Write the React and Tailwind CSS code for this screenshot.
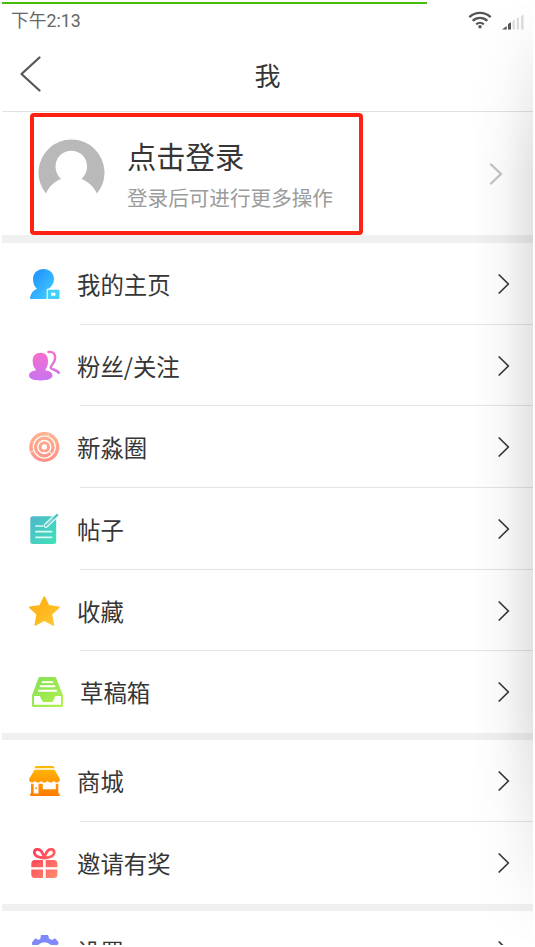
import React from 'react';

const HomeIcon = () => (
  <svg className="w-8 h-8" viewBox="0 0 32 32">
    <defs>
      <linearGradient id="home" x1="0" y1="0" x2="1" y2="1">
        <stop offset="0.1" stopColor="#1f8fff" />
        <stop offset="1" stopColor="#45d3ff" />
      </linearGradient>
    </defs>
    <path fill="url(#home)" d="M15.500 1C21.500 1 26 5.200 26 11c0 4.200-2.200 7.300-4.600 9.200L18.700 21v10H2c.3-5.300 3.200-8.700 7-10.300C6.500 18.700 5 15.200 5 11 5 5.200 9.500 1 15.500 1z" />
    <rect x="19.800" y="21.800" width="11.700" height="9.200" rx="1" fill="#42cffa" />
    <rect x="23.200" y="24.800" width="4.200" height="2.900" rx=".5" fill="#fff" />
  </svg>
);

const FansIcon = () => (
  <svg className="w-8 h-8" viewBox="0 0 32 32">
    <defs>
      <linearGradient id="fans" x1="0" y1="0" x2="0" y2="32" gradientUnits="userSpaceOnUse">
        <stop offset="0.1" stopColor="#f66fcf" />
        <stop offset="1" stopColor="#c574f3" />
      </linearGradient>
    </defs>
    <path fill="url(#fans)" d="M12.500 2.800c5 0 7.500 3 7.500 8 0 4-.8 6.700-2.500 8.500v1.300c4.400.5 7 2.300 7 5 0 3-4 4.900-12 4.900S1 28.600 1 25.600c0-2.700 2.600-4.500 6.600-5v-1.300c-2-1.800-2.900-4.500-2.900-8.500 0-5 2.800-8 7.800-8z" />
    <path fill="none" stroke="url(#fans)" strokeWidth="2.400" strokeLinecap="round" d="M20.500 2c5-.8 7.200 2.300 6.500 7-.4 3.300-2.700 5-4 7.500-.8 1.500.5 2.300 2.200 2.900 2.500.9 4.600 1.600 5.600 3.400" />
  </svg>
);

const CircleIcon = () => (
  <svg className="w-8 h-8" viewBox="0 0 32 32" fill="none">
    <defs>
      <linearGradient id="ring" x1="0" y1="0" x2="0" y2="32" gradientUnits="userSpaceOnUse">
        <stop stopColor="#ffb48f" />
        <stop offset="1" stopColor="#ff9088" />
      </linearGradient>
    </defs>
    <circle cx="16.300" cy="16" r="15" fill="url(#ring)" />
    <circle cx="16.300" cy="16" r="11" stroke="#fff" strokeWidth="1.200" />
    <circle cx="16.300" cy="16" r="6.500" stroke="#fff" strokeWidth="1.400" />
    <circle cx="16.300" cy="16" r="2.700" fill="#fff" />
    <path stroke="#ffd9cb" strokeWidth="1.300" d="M20.500 2.800l-1 3M2.500 21l3.200-1.200M21.500 20.500l2.800 3" />
    <circle cx="16.300" cy="22" r="1.200" fill="#fff" />
  </svg>
);

const PostIcon = () => (
  <svg className="w-8 h-8" viewBox="0 0 32 32" strokeLinecap="round">
    <defs>
      <linearGradient id="post" x1="0" y1="0" x2="1" y2="1">
        <stop stopColor="#50b5ca" />
        <stop offset="1" stopColor="#3fe3ba" />
      </linearGradient>
    </defs>
    <rect x="2.300" y="3.200" width="25.900" height="27.800" rx="2.500" fill="url(#post)" />
    <path stroke="#d9fbf4" strokeWidth="1.700" d="M8 13h6.500M8 18.700h15.500M8 24.300h15.500" />
    <path stroke="#e6fcf8" strokeWidth="4.800" d="M18 12.500L27 4" />
    <path stroke="#4cc5c6" strokeWidth="2.200" d="M18 12.500L29.300 1.900" />
    <path stroke="#e6fcf8" strokeWidth=".6" d="M19 11.600L25 6" />
  </svg>
);

const StarIcon = () => (
  <svg className="w-8 h-8" viewBox="0 0 32 32">
    <defs>
      <linearGradient id="star" x1="0" y1="0" x2="1" y2="1">
        <stop stopColor="#ffae18" />
        <stop offset="0.5" stopColor="#ffb81c" />
        <stop offset="1" stopColor="#ffc93c" />
      </linearGradient>
    </defs>
    <path fill="url(#star)" stroke="url(#star)" strokeWidth="1.600" strokeLinejoin="round" d="M16.300 2l4.300 8.900 10.200 1.400-7.400 6.800 1.900 10.900-9-4.900-9 4.900 1.900-10.900-7.400-6.800L12 10.900z" />
  </svg>
);

const DraftIcon = () => (
  <svg className="w-8 h-8" viewBox="0 0 32 32">
    <defs>
      <linearGradient id="draft" x1="0" y1="0" x2="1" y2="1">
        <stop stopColor="#82e052" />
        <stop offset="1" stopColor="#b5f052" />
      </linearGradient>
    </defs>
    <path fill="url(#draft)" fillRule="evenodd" d="M9.300 1h14c1 0 1.600.5 2 1.400L31.500 18c.3.700.5 1.200.5 2v9.500c0 .9-.6 1.500-1.500 1.500h-28C1.600 31 1 30.400 1 29.500V20c0-.8.200-1.300.5-2L7.300 2.400C7.700 1.500 8.300 1 9.300 1zM3 20v8.800h27V20h-5.500l-3 6h-9.700l-3-6z" />
    <path stroke="#fff" strokeWidth="1.900" strokeLinecap="round" d="M11.500 6.100h10M9.700 10.300h13.600M7.800 14.700h17.400" />
  </svg>
);

const ShopIcon = () => (
  <svg className="w-8 h-8" viewBox="0 0 32 32">
    <defs>
      <linearGradient id="shop" x1="0" y1="0" x2="0" y2="32" gradientUnits="userSpaceOnUse">
        <stop stopColor="#ffbd08" />
        <stop offset="1" stopColor="#ff7800" />
      </linearGradient>
    </defs>
    <path fill="url(#shop)" d="M8.500 1h16c1.200 0 2 .8 2 2.300h-20C6.500 1.800 7.300 1 8.500 1zM6.600 4.700h20L32 14c0 2-1.200 3.500-3 3.500-1.500 0-2.500-.7-3.100-1.800-.7 1.100-1.700 1.800-3.200 1.800s-2.600-.7-3.200-1.800c-.6 1.100-1.700 1.800-3.200 1.800s-2.500-.7-3.100-1.800c-.7 1.100-1.700 1.800-3.200 1.800s-2.500-.7-3.200-1.800C6.400 16.800 5.400 17.500 4 17.500c-1.800 0-3-1.500-3-3.500z" />
    <path fill="url(#shop)" fillRule="evenodd" d="M3 18.700h2.700v9.900h4.800v-9.900h4.300v5.600h13v-5.600h2.500v9.900h.7c.5 0 .8.500.8 1.200s-.3 1.200-.8 1.200H3c-.6 0-1-.5-1-1.200s.4-1.200 1-1.200z" />
    <circle cx="8.200" cy="23.300" r="1" fill="#ff9500" />
  </svg>
);

const GiftIcon = () => (
  <svg className="w-8 h-8" viewBox="0 0 32 32">
    <defs>
      <linearGradient id="gift" x1="3" y1="1" x2="30" y2="31" gradientUnits="userSpaceOnUse">
        <stop stopColor="#ff3152" />
        <stop offset="1" stopColor="#ff8f70" />
      </linearGradient>
    </defs>
    <path fill="none" stroke="url(#gift)" strokeWidth="2.800" d="M16.300 11C14.800 5 12 2 9 2.400c-3 .4-3.400 3.900-1.400 5.800 1.900 1.800 5 2.500 8.700 2.800 3.700-.3 6.800-1 8.700-2.800 2-1.900 1.600-5.400-1.400-5.800-3-.4-5.800 2.600-7.300 8.600z" />
    <path fill="url(#gift)" d="M7 13h8v7.200H3.300V17c0-2.600 1.200-4 3.700-4zM17.700 13h8c2.500 0 3.700 1.400 3.700 4v3.200H17.700zM3.300 22.600H15V31H7c-2.500 0-3.700-1.300-3.700-3.600zM17.700 22.600h11.700v4.800c0 2.300-1.200 3.600-3.700 3.600h-8z" />
  </svg>
);

const GearIcon = () => (
  <svg className="w-8 h-8" viewBox="0 0 32 32">
    <path fill="#7f89fb" fillRule="evenodd" d="M13.800 0h5.400c.8 0 1.100.4 1.300 1.200l.5 2.300 3 1.500 2-1.200c.8-.4 1.300-.3 1.800.3l2.400 3c.5.700.5 1.200 0 1.900l-1.500 2.200v10l1.500 2.300-3.700 5-3.500-1.500-3 1.500-1 3.500h-6l-1-3.500-3-1.500-3.500 1.500-3.700-5 1.500-2.300v-10L4.300 9c-.5-.7-.5-1.200 0-1.900l2.400-3c.5-.6 1-.7 1.800-.3l2 1.200 2-1.500.2-2.300C12.800.4 13 0 13.800 0zM16.500 7.300a8.700 8.700 0 100 17.400 8.700 8.700 0 000-17.400z" />
  </svg>
);

const Arrow = ({ className = '' }) => (
  <svg className={`w-3 h-5 shrink-0 ${className}`} viewBox="0 0 12 20" fill="none" stroke="currentColor">
    <path d="M1.200 1l9.200 9-9.200 9" strokeWidth="1.700" strokeLinecap="round" strokeLinejoin="round" />
  </svg>
);

const Row = ({ icon: Icon, label, last, indent }) => (
  <div className="relative h-[81.700px] flex items-center pl-[26px] pr-[23px] text-[#363636]">
    <div className={indent ? 'ml-[3px] mr-[17px]' : 'mr-[17px]'}>
      <Icon />
    </div>
    <span className="flex-1 text-[23.400px] leading-8 whitespace-nowrap">{label}</span>
    <Arrow />
    {!last && <div className="absolute left-[78px] right-0 bottom-0 h-px bg-[#e4e4e4]" />}
  </div>
);

const mainRows = [
  { icon: HomeIcon, label: '我的主页' },
  { icon: FansIcon, label: '粉丝/关注' },
  { icon: CircleIcon, label: '新淼圈' },
  { icon: PostIcon, label: '帖子' },
  { icon: StarIcon, label: '收藏' },
  { icon: DraftIcon, label: '草稿箱', indent: true },
];

const shopRows = [
  { icon: ShopIcon, label: '商城' },
  { icon: GiftIcon, label: '邀请有奖' },
];

const RowList = ({ rows }) =>
  rows.map((row, i) => <Row key={row.label} {...row} last={i === rows.length - 1} />);

const App = () => {
  return (
    <div className="w-[535px] h-[947px] bg-white overflow-hidden">
      <div className="relative w-[533px] h-[945px] pl-[2px] overflow-hidden font-['Noto_Sans_CJK_SC',sans-serif]">
        {/* page load progress */}
        <div className="mt-[2px] w-[425px] h-[2px] bg-[#45be0b]" />

        <div className="h-[34px] flex items-center pl-[9px] pr-[9px] text-[#666]">
          <span className="flex-1 font-['Roboto','Noto_Sans_CJK_SC',sans-serif] text-[17.800px] leading-6">下午2:13</span>
          <svg className="w-6 h-[18px] mr-2.5 -mt-0.5" viewBox="0 0 24 18" fill="none" stroke="#555" strokeWidth="2.300">
            <path d="M1.300 6.200a15.500 15.500 0 0121.400 0M4.700 9.900a10.500 10.500 0 0114.600 0M8.200 13.300a5.600 5.600 0 017.600 0" />
            <circle cx="12" cy="15.800" r="1.700" fill="#555" stroke="none" />
          </svg>
          <svg className="w-[22px] h-4 mt-0.5" viewBox="0 0 22 16">
            <path fill="#555" d="M0 15.500l4.700-3.500v3.500zM6 10l3-1.700v7.200H6z" />
            <path fill="#dedede" d="M10.500 7l2.300-1.500v10h-2.300zM14.700 4.500L17 3v12.500h-2.300zM19 2l2.500-1.500v15H19z" />
          </svg>
        </div>

        <div className="relative h-[74px] flex items-center justify-center border-b border-[#e2e2e2]">
          <svg className="absolute left-[17px] top-[18px] w-[22px] h-[36px]" viewBox="0 0 22 36" fill="none">
            <path d="M20.500 1.500L2.500 18l18 16.500" stroke="#555" strokeWidth="2.200" strokeLinecap="round" strokeLinejoin="round" />
          </svg>
          <h1 className="text-[26px] leading-9 text-[#363636]">我</h1>
        </div>

        <div className="h-[123px] flex items-center pl-[28px] pr-[30px]">
          <div className="-my-1 w-[333px] h-[122px] shrink-0 border-[4px] border-[#ff2113] rounded-[4px] flex items-center pl-[4px]">
            <svg className="w-[67px] h-[67px] shrink-0 -mt-0.5" viewBox="0 0 67 67">
              <path fill="#b9b9b9" d="M8 54.500A33 33 0 1159 54.500C55.500 47.500 50.500 42.700 43.500 40c3.500-3.300 5.600-7.600 5.600-12.500a15.800 15.800 0 00-31.600 0c0 4.900 2 9.200 5.500 12.500-7 2.700-12 7.500-15 14.500z" />
            </svg>
            <div className="ml-[22px] mt-[5px] whitespace-nowrap">
              <div className="text-[29.300px] leading-[42px] text-[#363636]">点击登录</div>
              <div className="text-[20.600px] leading-[42px] text-[#9b9b9b]">登录后可进行更多操作</div>
            </div>
          </div>
          <svg className="w-[14px] h-[22px] ml-auto" viewBox="0 0 14 22" fill="none">
            <path d="M2 1.500l10 9.500-10 9.500" stroke="#c4c4c4" strokeWidth="2.400" strokeLinecap="round" strokeLinejoin="round" />
          </svg>
        </div>

        <div className="h-[8px] bg-[#f0f0f0]" />
        <RowList rows={mainRows} />
        <div className="h-[7px] bg-[#f0f0f0]" />
        <RowList rows={shopRows} />
        <div className="h-[7px] bg-[#f0f0f0]" />
        <Row icon={GearIcon} label="设置" last />

        {/* soft shade along the right edge */}
        <div className="absolute right-0 top-0 w-[60px] h-full bg-gradient-to-r from-transparent via-black/[0.030] to-black/[0.110] [mask-image:linear-gradient(to_bottom,transparent,black_18%,black_75%,transparent)]" />
      </div>
    </div>
  );
};

export default App;
